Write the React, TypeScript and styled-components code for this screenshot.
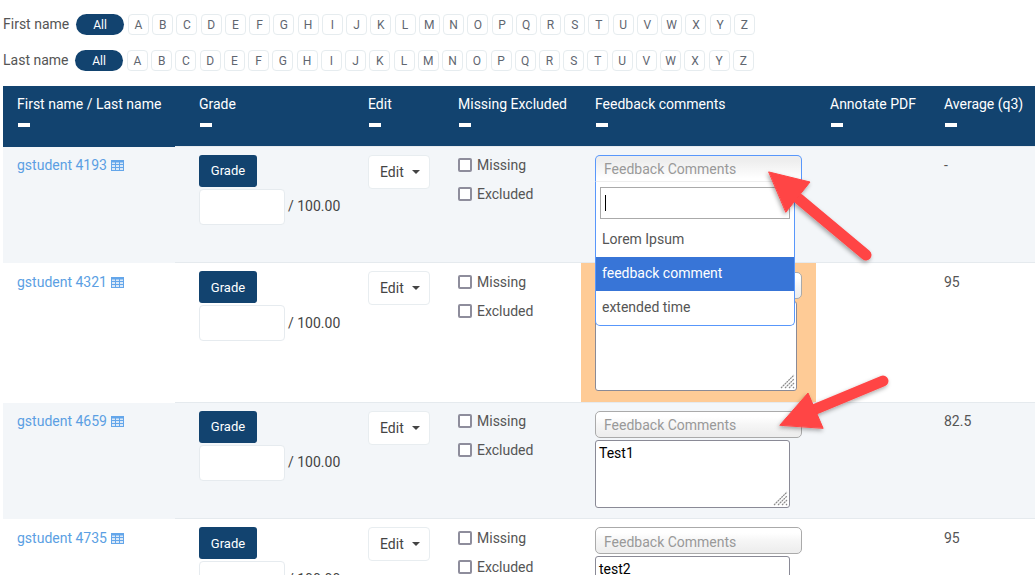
import React from 'react';
import styled, { createGlobalStyle } from 'styled-components';

const Global = createGlobalStyle`
  html, body { margin: 0; padding: 0; height: 575px; overflow: hidden; background: #fff; }
  body { font-family: Roboto, "Liberation Sans", sans-serif; font-size: 14px; color: #555; }
  * { box-sizing: border-box; }
`;

const Page = styled.div`
  position: relative;
  width: 1035px;
  height: 575px;
  overflow: hidden;
  padding: 14px 0 0 3px;
`;
const FilterRow = styled.div`
  display: flex;
  align-items: center;
  height: 21px;
  margin-bottom: 15px;
`;
const FilterLabel = styled.span<{ $w: number }>`
  width: ${p => p.$w}px;
  font-size: 14px;
  color: #555;
  margin-bottom: 2px;
`;
const AllPill = styled.span`
  width: 48px;
  height: 21px;
  border-radius: 11px;
  background: #12436f;
  color: #fff;
  font-size: 12px;
  display: flex;
  align-items: center;
  justify-content: center;
  margin-right: 4px;
`;
const Letters = styled.div`
  display: flex;
  gap: 3.24px;
`;
const Letter = styled.span`
  width: 21px;
  height: 21px;
  border: 1px solid #e6ecef;
  border-radius: 4px;
  background: #fff;
  color: #5f6670;
  font-size: 12px;
  display: flex;
  align-items: center;
  justify-content: center;
`;
const columns = '172px 179px 90px 137px 235px 114px 105px';
const Header = styled.div`
  display: grid;
  grid-template-columns: ${columns};
  background: #12436f;
  height: 61px;
  color: #fff;
`;
const HeadCell = styled.div<{ $first?: boolean }>`
  padding: 8px 0 0 ${p => (p.$first ? 24 : 14)}px;
  line-height: 20px;
  font-size: 14px;
  white-space: nowrap;
`;
const FirstHead = styled(HeadCell)`
  padding-left: 14px;
`;
const SortBar = styled.div`
  width: 12px;
  height: 3.5px;
  margin: 9px 0 0 1px;
  background: #fff;
`;
const Row = styled.div<{ $alt: boolean; $height: number }>`
  display: grid;
  grid-template-columns: ${columns};
  height: ${p => p.$height}px;
  background: ${p => (p.$alt ? '#f3f6f9' : '#fff')};
`;
const NameCell = styled.div<{ $nudge: number }>`
  padding: ${p => 8 + p.$nudge}px 0 0 14px;
  line-height: 20px;
`;
const StudentLink = styled.a`
  color: #5b9fe3;
  display: inline-flex;
  align-items: center;
  gap: 4px;
`;
const Cell = styled.div<{ $pad?: number; $nudge?: number; $highlight?: boolean }>`
  position: relative;
  margin-top: -1px;
  border-top: 1px solid #e5eaee;
  padding: ${p => 8 + (p.$nudge ?? 0)}px 0 0 ${p => p.$pad ?? 14}px;
  line-height: 20px;
  background: ${p => (p.$highlight ? '#fecb96' : 'transparent')};
`;
const GradeButton = styled.button<{ $up: boolean }>`
  display: block;
  width: 58px;
  height: 32px;
  border: none;
  border-radius: 3px;
  background: #12436f;
  color: #fff;
  font: 400 13px Roboto, sans-serif;
  padding: 0 0 ${p => (p.$up ? 2 : 0)}px;
  margin-bottom: 2px;
`;
const GradeLine = styled.div`
  display: flex;
  align-items: center;
  gap: 3px;
  color: #444;
`;
const GradeMax = styled.span<{ $up: boolean }>`
  margin-bottom: ${p => (p.$up ? 2 : 0)}px;
`;
const GradeInput = styled.input`
  width: 86px;
  height: 36px;
  border: 1px solid #e6ebef;
  border-radius: 4px;
  background: #fff;
`;
const EditButton = styled.button`
  width: 62px;
  height: 34px;
  background: #fff;
  border: 1px solid #e8edf0;
  border-radius: 4px;
  color: #444;
  font: 14px Roboto, sans-serif;
  display: flex;
  align-items: center;
  gap: 8px;
  padding: 0 0 0 11px;
`;
const Caret = styled.span`
  width: 0;
  height: 0;
  border-left: 4px solid transparent;
  border-right: 4px solid transparent;
  border-top: 4px solid #444;
`;
const CheckLine = styled.label`
  display: flex;
  align-items: center;
  gap: 5px;
  height: 20px;
  margin-bottom: 9px;
  color: #555;
`;
const Check = styled.input`
  appearance: none;
  width: 14px;
  height: 14px;
  margin: 0;
  background: #fff;
  border: 2px solid #8e8d9c;
  border-radius: 2px;
`;
const Select = styled.div<{ $open?: boolean; $down?: boolean }>`
  width: 207px;
  height: 27px;
  padding: ${p => (p.$down ? 2 : 0)}px 0 0 8px;
  display: flex;
  align-items: center;
  color: #999;
  border: 1px solid ${p => (p.$open ? '#5897fb' : '#aaa')};
  border-bottom-color: ${p => (p.$open ? 'transparent' : '#aaa')};
  border-radius: ${p => (p.$open ? '5px 5px 0 0' : '5px')};
  background: ${p =>
    p.$open
      ? 'linear-gradient(#eee 20%, #fff 90%)'
      : 'linear-gradient(#fff 20%, #f6f6f6 50%, #eee 90%)'};
`;
const CommentWrap = styled.div<{ $w: number; $h: number }>`
  position: relative;
  width: ${p => p.$w}px;
  height: ${p => p.$h}px;
  margin-top: 2px;
`;
const Comment = styled.textarea`
  display: block;
  width: 100%;
  height: 100%;
  margin: 0;
  padding: 2px 3px;
  border: 1px solid #8a8a96;
  border-radius: 3px;
  background: #fff;
  color: #000;
  font: 14px/20px Roboto, sans-serif;
  resize: none;
  outline: none;
`;
const ResizeHandle = styled.svg`
  position: absolute;
  right: 2px;
  bottom: 2px;
`;
const Dropdown = styled.div`
  position: absolute;
  z-index: 5;
  left: 14px;
  top: 35px;
  width: 200px;
  height: 144px;
  background: #fff;
  border: 1px solid #5897fb;
  border-top: none;
  border-radius: 0 0 5px 5px;
  padding: 5px 4px 0;
`;
const Search = styled.div`
  display: flex;
  align-items: center;
  width: 190px;
  height: 32px;
  padding-left: 4px;
  border: 1px solid #aaa;
  background: #fff;
  margin-bottom: 4px;
`;
const TextCursor = styled.span`
  width: 1px;
  height: 16px;
  background: #000;
`;
const Option = styled.div<{ $active?: boolean }>`
  height: 34px;
  margin: 0 -4px;
  padding: 0 0 2px 6px;
  display: flex;
  align-items: center;
  background: ${p => (p.$active ? '#3875d7' : 'transparent')};
  color: ${p => (p.$active ? '#fff' : '#555')};
`;
const Arrows = styled.svg`
  position: absolute;
  z-index: 10;
  left: 0;
  top: 0;
  pointer-events: none;
`;

const GridIcon = () => (
  <svg width="13" height="11" viewBox="0 0 13 11" fill="#dbe9f8" stroke="#64a6ea" strokeWidth="1">
    <rect x="0.5" y="0.5" width="12" height="10" />
    <path d="M0 1.5H13" strokeWidth="2" />
    <path d="M0.5 4.5H12.5M0.5 7.5H12.5M4.5 2V10.5M8.5 2V10.5" />
  </svg>
);

const HatchIcon = () => (
  <ResizeHandle width="15" height="15" viewBox="0 0 15 15" stroke="#8a8a8a" strokeWidth="1.2" strokeDasharray="2 0.6">
    <path d="M1 14L14 1M5 14L14 5M9 14L14 9M13 14L14 13" />
  </ResizeHandle>
);

const alphabet = 'ABCDEFGHIJKLMNOPQRSTUVWXYZ'.split('');
const heads = ['Grade', 'Edit', 'Missing Excluded', 'Feedback comments', 'Annotate PDF', 'Average (q3)'];
const rows = [
  { id: 4193, avg: '-', h: 116, ta: 68, w: 195, text: '', open: true, nudge: 0, up: true },
  { id: 4321, avg: '95', h: 140, ta: 90, w: 202, text: '', highlight: true, nudge: 1, up: false },
  { id: 4659, avg: '82.5', h: 116, ta: 68, w: 195, text: 'Test1', nudge: 0, up: true },
  { id: 4735, avg: '95', h: 116, ta: 68, w: 195, text: 'test2', nudge: 1, up: false },
];

const Filter = ({ label, w }: { label: string; w: number }) => (
  <FilterRow>
    <FilterLabel $w={w}>{label}</FilterLabel>
    <AllPill>All</AllPill>
    <Letters>
      {alphabet.map(l => (
        <Letter key={l}>{l}</Letter>
      ))}
    </Letters>
  </FilterRow>
);

export default function App() {
  return (
    <Page>
      <Global />
      <Filter label="First name" w={73} />
      <Filter label="Last name" w={72} />
      <Header>
        <FirstHead>
          First name / Last name
          <SortBar />
        </FirstHead>
        {heads.map((h, i) => (
          <HeadCell key={h} $first={i === 0}>
            {h}
            <SortBar />
          </HeadCell>
        ))}
      </Header>
      {rows.map((r, i) => (
        <Row key={r.id} $alt={i % 2 === 0} $height={r.h}>
          <NameCell $nudge={r.nudge}>
            <StudentLink>
              gstudent {r.id} <GridIcon />
            </StudentLink>
          </NameCell>
          <Cell $pad={24}>
            <GradeButton $up={r.up}>Grade</GradeButton>
            <GradeLine>
              <GradeInput />
              <GradeMax $up={r.up}>/ 100.00</GradeMax>
            </GradeLine>
          </Cell>
          <Cell>
            <EditButton>
              Edit <Caret />
            </EditButton>
          </Cell>
          <Cell $nudge={r.nudge}>
            <CheckLine>
              <Check type="checkbox" /> Missing
            </CheckLine>
            <CheckLine>
              <Check type="checkbox" /> Excluded
            </CheckLine>
          </Cell>
          <Cell $highlight={r.highlight} $nudge={r.highlight ? 1 : 0}>
            <Select $open={r.open} $down={r.id === 4735}>Feedback Comments</Select>
            {!r.open && (
              <CommentWrap $w={r.w} $h={r.ta}>
                <Comment defaultValue={r.text} />
                <HatchIcon />
              </CommentWrap>
            )}
            {r.open && (
              <Dropdown>
                <Search>
                  <TextCursor />
                </Search>
                <Option>Lorem Ipsum</Option>
                <Option $active>feedback comment</Option>
                <Option>extended time</Option>
              </Dropdown>
            )}
          </Cell>
          <Cell />
          <Cell $nudge={r.nudge}>{r.avg}</Cell>
        </Row>
      ))}
      <Arrows width="1035" height="575" viewBox="0 0 1035 575">
        <defs>
          <filter id="arrowShadow" x="-20%" y="-20%" width="140%" height="140%">
            <feDropShadow dx="-1" dy="2" stdDeviation="2" floodColor="#000" floodOpacity="0.35" />
          </filter>
        </defs>
        <g filter="url(#arrowShadow)" fill="#ff4444" stroke="#ff4444" strokeLinecap="round" strokeLinejoin="round">
          <path d="M866 255 L799 199" strokeWidth="11" fill="none" />
          <path d="M769 172 L810 182 L786 212 Z" strokeWidth="1" />
          <path d="M883 381 L806 413" strokeWidth="11" fill="none" />
          <path d="M780 425 L808 393 L823 428 Z" strokeWidth="1" />
        </g>
      </Arrows>
    </Page>
  );
}
